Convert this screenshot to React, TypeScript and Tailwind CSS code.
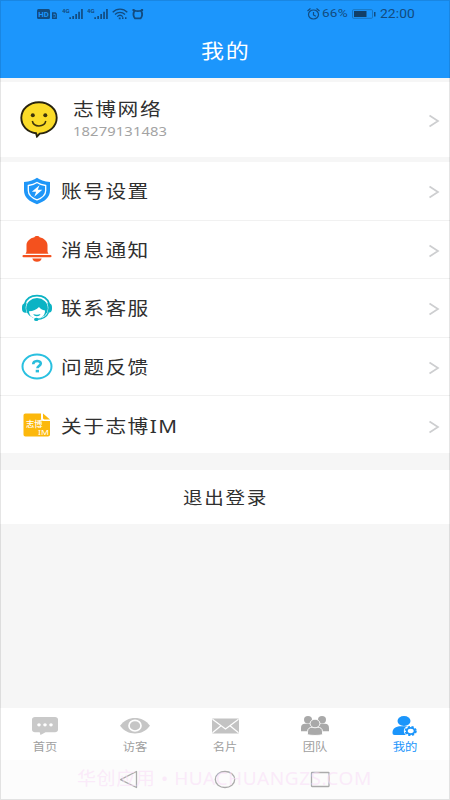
import React from "react";

const menuItems = [
  { id: 1, label: "账号设置", icon: <ShieldIcon /> },
  { id: 2, label: "消息通知", icon: <BellIcon /> },
  { id: 3, label: "联系客服", icon: <ServiceIcon /> },
  { id: 4, label: "问题反馈", icon: <QuestionIcon /> },
  { id: 5, label: "关于志博IM", icon: <AboutIcon /> },
];

const tabs = [
  { id: 1, label: "首页", icon: <ChatIcon /> },
  { id: 2, label: "访客", icon: <EyeIcon /> },
  { id: 3, label: "名片", icon: <MailIcon /> },
  { id: 4, label: "团队", icon: <TeamIcon /> },
  { id: 5, label: "我的", icon: <MineIcon />, active: true },
];

function ShieldIcon() {
  return (
    <svg width="30" height="28" viewBox="0 0 30 28" fill="none">
      <path d="M15 .7C18 3 22 4.3 28 5v8.5c0 6.500-5 11-13 13.700C7 24.500 2 20 2 13.500V5c6-.7 10-2 13-4.300z" fill="#1e96f8" />
      <path d="M15 5.500c2.500 1.700 5 2.500 8.700 3v5c0 4-3.200 7.300-8.700 9.300-5.500-2-8.700-5.300-8.700-9.300v-5c3.700-.5 6.200-1.300 8.700-3z" stroke="#fff" strokeWidth="1.300" />
      <path d="M17.500 8.200 9.800 14.700h4.300l-1.800 5 8-6.900h-4.500z" fill="#fff" />
    </svg>
  );
}

function BellIcon() {
  return (
    <svg width="30" height="28" viewBox="0 0 30 28" fill="#f4511e">
      <path d="M12.400 2.200C12.800.5 17.200.5 17.600 2.200c4.500 1 7.900 4 7.900 8v6c0 1 .4 1.700 1 2.500h-23c.6-.8 1-1.500 1-2.500v-6c0-4 3.400-7 7.900-8z" />
      <rect x=".5" y="19.900" width="29" height="2.400" rx="1.100" />
      <path d="M10.300 23.500h9.400c-.5 2-2.200 3.300-4.700 3.300s-4.200-1.300-4.700-3.300z" />
    </svg>
  );
}

function ServiceIcon() {
  return (
    <svg width="30" height="28" viewBox="0 0 30 28">
      <path d="M2.700 10C4.500 4.300 9 1.700 15 1.700S25.500 4.300 27.300 10" fill="none" stroke="#0bb3c4" strokeWidth="1.800" />
      <ellipse cx="15" cy="14.300" rx="10.800" ry="10.200" fill="#0bb3c4" />
      <path d="M7 17.300c4.200-.3 7.500-1.600 10-4.300 1.400 1.800 3.200 2.900 6 3.500.2 4.500-3 8-8 8s-7.800-3-8-7.200z" fill="#fff" />
      <path d="M3.500 9.300h1.300c-1.500 3-1.500 6 0 9.400H3.500C1.200 18.700 0 17.200 0 15v-2c0-2.200 1.200-3.700 3.500-3.700zM26.500 9.300h-1.300c1.500 3 1.500 6 0 9.400h1.300c2.300 0 3.500-1.500 3.500-3.700v-2c0-2.200-1.200-3.700-3.500-3.700z" fill="#0bb3c4" />
      <path d="M11.300 20c2 1 5.200 1 7.200 0-.6 1.600-1.700 2.200-3.600 2.200s-3-.6-3.600-2.200z" fill="#0bb3c4" />
      <path d="M26.500 18.500c-1.700 4.200-5.500 6.600-12 6.900" fill="none" stroke="#0bb3c4" strokeWidth="1.400" />
      <ellipse cx="14.300" cy="25.400" rx="2.200" ry="1.700" fill="#0bb3c4" />
    </svg>
  );
}

function QuestionIcon() {
  return (
    <svg width="32" height="28" viewBox="0 0 32 28" fill="none">
      <ellipse cx="16" cy="14.500" rx="14.500" ry="11.900" stroke="#29c0e0" strokeWidth="2" />
      <path d="M12.200 12.300c0-4.300 7.600-4.400 7.600-.7 0 2.300-3.400 2.200-3.400 4.700" stroke="#29bddc" strokeWidth="2.600" />
      <rect x="14.700" y="17.800" width="3.300" height="2.600" fill="#29bddc" />
    </svg>
  );
}

function AboutIcon() {
  return (
    <svg width="28" height="24" viewBox="0 0 28 24">
      <path d="M2.500.5H18v5.300c0 1.500.8 2.200 2.200 2.200H27v13.500c0 1.200-.8 2-2 2H2.500c-1.200 0-2-.8-2-2v-19c0-1.200.8-2 2-2z" fill="#fcb80c" />
      <path d="M20 .5 27 6.500h-5.500c-1 0-1.500-.5-1.500-1.400z" fill="#fcb80c" />
      <text x="3" y="14.200" fontSize="7.500" fill="#fff" fontWeight="500" textLength="16.500" lengthAdjust="spacingAndGlyphs" fontFamily="Noto Sans CJK SC, sans-serif">志博</text>
      <text x="15" y="22" fontSize="7.500" fill="#fff" textLength="11" lengthAdjust="spacingAndGlyphs" fontFamily="Noto Sans, sans-serif">IM</text>
    </svg>
  );
}

function ChatIcon() {
  return (
    <svg width="26" height="20" viewBox="0 0 26 20">
      <path d="M3 1h20c1.800 0 3 1 3 2.500v10.200c0 1.500-1.200 2.500-3 2.500h-9.500L8.500 19l-.8-2.800H3c-1.800 0-3-1-3-2.500V3.500C0 2 1.200 1 3 1z" fill="#c9c9c9" />
      <g fill="#fff">
        <ellipse cx="7" cy="8.800" rx="1.800" ry="1.600" />
        <ellipse cx="13" cy="8.800" rx="1.800" ry="1.600" />
        <ellipse cx="19" cy="8.800" rx="1.800" ry="1.600" />
      </g>
    </svg>
  );
}

function EyeIcon() {
  return (
    <svg width="30" height="20" viewBox="0 0 30 20">
      <path d="M0 9.700C4 4.500 9 2 15 2s11 2.500 15 7.700c-4 5.200-9 7.700-15 7.700S4 14.900 0 9.700z" fill="#c6c6c6" />
      <ellipse cx="15" cy="9.700" rx="6" ry="5.300" fill="none" stroke="#fff" strokeWidth="1.700" />
    </svg>
  );
}

function MailIcon() {
  return (
    <svg width="27" height="20" viewBox="0 0 27 20">
      <rect y="2.500" width="27" height="15" rx="1" fill="#c3c3c3" />
      <path d="M.5 3.300 13.500 13 26.500 3.300M.5 16.800l8.500-7M26.500 16.800l-8.500-7" fill="none" stroke="#fff" strokeWidth="1.200" />
    </svg>
  );
}

function TeamIcon() {
  return (
    <svg width="28" height="20" viewBox="0 0 28 20" fill="#a9a9a9">
      <ellipse cx="7" cy="3.700" rx="4" ry="3.700" />
      <ellipse cx="21" cy="3.700" rx="4" ry="3.700" />
      <path d="M0 15.300V12c0-2.800 1.500-4.200 4-4.200h6c2.500 0 4 1.400 4 4.200v3.300zM14 15.300V12c0-2.800 1.500-4.200 4-4.200h6c2.500 0 4 1.400 4 4.200v3.300z" />
      <path d="M6.500 18.700v-3c0-3 2-4.500 5-4.500h5c3 0 5 1.500 5 4.500v3c-4 1-11 1-15 0z" stroke="#fff" strokeWidth=".9" />
      <ellipse cx="14" cy="7.500" rx="4.900" ry="4.300" stroke="#fff" strokeWidth=".9" />
    </svg>
  );
}

function MineIcon() {
  return (
    <svg width="26" height="20" viewBox="0 0 26 20">
      <ellipse cx="12" cy="5" rx="6.500" ry="5" fill="#1b95fb" />
      <path d="M.5 16.800C.5 12.500 3.500 10.300 9 10.300h5.500c2 0 3.500.3 4.700 1V19H2.500c-1.300 0-2-.8-2-2.200z" fill="#1b95fb" />
      <ellipse cx="18.700" cy="15" rx="6.900" ry="5.700" fill="#fff" />
      <ellipse cx="18.700" cy="15" rx="5.200" ry="4.100" fill="none" stroke="#1b95fb" strokeWidth="1.800" strokeDasharray="2.200 1.500" />
      <ellipse cx="18.700" cy="15" rx="3.900" ry="3.100" fill="none" stroke="#1b95fb" strokeWidth="1.900" />
    </svg>
  );
}

function Avatar() {
  return (
    <svg width="38" height="37" viewBox="0 0 38 37">
      <path d="M19 1.200c10 0 17.700 6.800 17.700 15.600 0 8.500-7.200 15-17 15.800L17 35.500l-1-3.300C7.300 31 1.300 24.800 1.300 16.800 1.300 8 9 1.200 19 1.200z" fill="#fbdc28" stroke="#29240f" strokeWidth="1.900" />
      <circle cx="12.800" cy="14.300" r="2" fill="#3d340c" />
      <circle cx="25.300" cy="14.300" r="2" fill="#3d340c" />
      <path d="M12.300 20c1.300 6.500 12 6.500 13.500 0" fill="none" stroke="#3d340c" strokeWidth="1.500" />
    </svg>
  );
}

function Arrow() {
  return (
    <svg className="mt-[3px]" width="12" height="14" viewBox="0 0 12 14" fill="none" stroke="#cdced0" strokeWidth="1.700">
      <path d="M1.500 1.500 10 7 1.500 12.500" />
    </svg>
  );
}

function Signal() {
  return (
    <svg width="22" height="14" viewBox="0 0 22 14" fill="#124b7f">
      <text x="0" y="5.500" fontSize="6" fontWeight="700" fontFamily="Roboto, sans-serif">4G</text>
      <path d="M7.300 10.300H9V12H7.300zM10.300 9H12v3h-1.700zM13.300 7H15v5h-1.700zM16.200 4.700h1.700V12h-1.700zM19.100 2h1.700v10h-1.700z" />
    </svg>
  );
}

function StatusBar() {
  return (
    <div className="flex h-7 items-center justify-between pr-[35px] pl-[37px] text-[#124b7f]">
      <div className="flex items-center">
        <svg width="25" height="14" viewBox="0 0 25 14">
          <rect y="2" width="13" height="10" rx="1.500" fill="#124b7f" />
          <text x="1.300" y="10" fontSize="8" fontWeight="700" fill="#1c96fc" textLength="10.500" lengthAdjust="spacingAndGlyphs" fontFamily="Roboto, sans-serif">HD</text>
          <path d="M15.700 6h2.500l1 1v4.200h-3.500zM17.200 7.800v2" fill="none" stroke="#124b7f" strokeWidth="1.400" />
        </svg>
        <Signal />
        <div className="ml-[3px]">
          <Signal />
        </div>
        <svg className="ml-[3px]" width="35" height="14" viewBox="0 0 35 14" fill="none" stroke="#124b7f">
          <path d="M.7 5.200c4-4.200 10.600-4.200 14.600 0M3 7.500c2.800-2.800 7.200-2.800 10 0M5.200 9.600c1.600-1.500 4-1.500 5.600 0" strokeWidth="1.300" />
          <path d="M6.800 11.300h1.800M10 11.200h1.500M13 11.200h1.500" strokeWidth="1.700" />
          <path d="M22.500 3.500c-1.200 2.500-1.200 6 .5 7.900h5.600c1.700-1.900 1.700-5.400.5-7.900-2.300.8-4.300.8-6.600 0zM20.500 3h2M29.100 3h2" strokeWidth="1.800" />
        </svg>
      </div>
      <div className="flex items-center font-[Roboto,sans-serif] leading-none">
        <svg width="13" height="14" viewBox="0 0 13 14" fill="none" stroke="#124b7f" strokeWidth="1.200">
          <ellipse cx="6.500" cy="7.500" rx="5" ry="4.500" />
          <path d="M6.500 5v3l2.300 1.300M.5 4l3-2.500M12.500 4l-3-2.500" />
        </svg>
        <span className="ml-[2px] w-[28px] origin-left scale-x-118 text-[11.500px] tracking-[0.2px]">66%</span>
        <svg className="ml-[2px]" width="24" height="14" viewBox="0 0 24 14">
          <rect x=".5" y="2.700" width="20" height="8.600" rx="1" fill="none" stroke="#1870b9" strokeWidth=".9" />
          <rect x="2" y="4" width="12.500" height="6" fill="#123f66" />
          <rect x="22" y="5" width="1.500" height="4.500" fill="#124b7f" />
        </svg>
        <span className="ml-1 w-[35px] origin-left scale-x-115 text-[12px] tracking-[0.1px]">22:00</span>
      </div>
    </div>
  );
}

export default function App() {
  return (
    <div className="relative flex h-[800px] w-[450px] flex-col overflow-hidden bg-[#f6f6f6] font-['Noto_Sans','Noto_Sans_CJK_SC',sans-serif]">
      <header className="h-[78px] bg-[#1c96fc]">
        <StatusBar />
        <h1 className="mt-[9px] ml-[201px] origin-left scale-x-115 text-[20px] leading-[30px] tracking-[1.5px] text-white">
          我的
        </h1>
      </header>

      <section className="mt-1 flex h-[75px] items-center bg-white pr-[10px] pl-5">
        <Avatar />
        <div className="ml-[15px] flex-1">
          <p className="-mt-px origin-left scale-x-115 text-[18px] leading-6 tracking-[1.4px] text-[#303030]">
            志博网络
          </p>
          <p className="mt-px origin-left scale-x-118 text-[12.5px] leading-5 tracking-[0.1px] text-[#a3a3a3]">
            18279131483
          </p>
        </div>
        <Arrow />
      </section>

      <section className="mt-[5px] h-[291px] bg-white">
        {menuItems.map((item) => (
          <div
            key={item.id}
            className="flex h-[58.5px] items-center border-b border-[#f1f1f1] pr-[10px] pl-[21px] last:border-b-0"
          >
            <div className="flex w-8 justify-center">{item.icon}</div>
            <p className="mt-px ml-[7.5px] flex-1 origin-left scale-x-115 text-[18px] leading-6 tracking-[1.3px] text-[#303030]">
              {item.label}
            </p>
            <Arrow />
          </div>
        ))}
      </section>

      <button className="mt-[17px] flex h-[54px] items-center bg-white pl-[183px] text-[17px] text-[#303030]">
        <span className="mt-px origin-left scale-x-115 tracking-[1.500px]">退出登录</span>
      </button>

      <nav className="mt-auto grid h-[52px] grid-cols-5 bg-white">
        {tabs.map((tab) => (
          <div
            key={tab.id}
            className={`flex flex-col items-center pt-2 text-[11px] leading-[22px] ${
              tab.active ? "text-[#1b95fb]" : "text-[#a0a0a0]"
            }`}
          >
            {tab.icon}
            <span className="scale-x-112">{tab.label}</span>
          </div>
        ))}
      </nav>

      <footer className="relative h-10 bg-[#fcfcfc]">
        <svg className="h-10 w-full" viewBox="0 0 450 40" fill="none" stroke="#ababab" strokeWidth="1.300">
          <path d="M136.500 11.500v16L120.500 19.600z" strokeLinejoin="round" />
          <ellipse cx="225" cy="19.500" rx="9.700" ry="8" />
          <rect x="311.500" y="12.500" width="17.500" height="14" rx=".5" />
        </svg>
        <p className="absolute top-1 left-[77px] origin-left scale-x-106 text-[18px] leading-7 tracking-[0.5px] whitespace-nowrap text-[#f9def7]/60">
          华创应用 • HUACHUANGZS.COM
        </p>
      </footer>

      <div className="pointer-events-none absolute inset-0 border border-black/10" />
    </div>
  );
}
